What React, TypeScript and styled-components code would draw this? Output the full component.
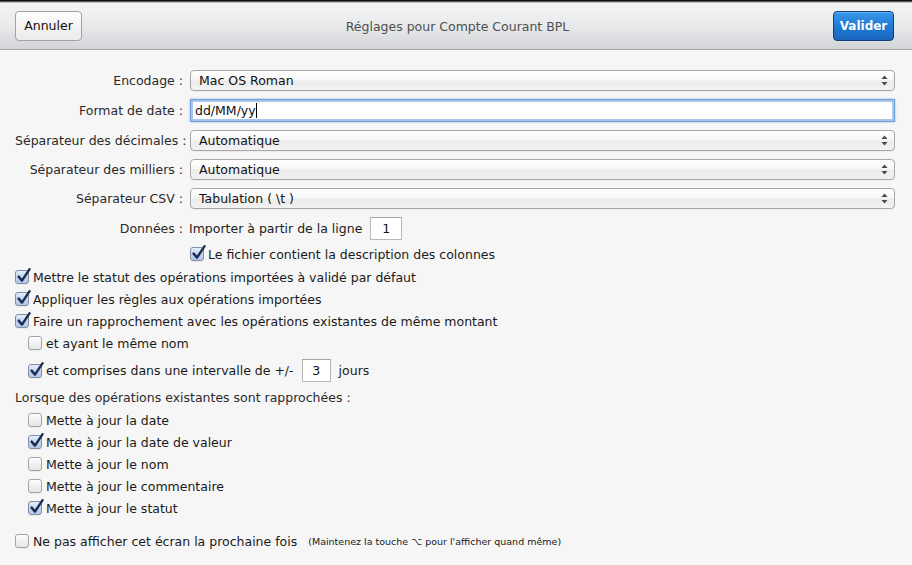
import React from "react";
import styled, { createGlobalStyle } from "styled-components";

const GlobalStyle = createGlobalStyle`
  html, body { margin: 0; padding: 0; }
  body {
    background: #f6f6f6;
    font-family: "DejaVu Sans", "Liberation Sans", sans-serif;
    font-size: 12.5px;
    color: #1c1c1c;
  }
  * { box-sizing: border-box; }
`;

const Window = styled.div`
  width: 912px;
  height: 565px;
  background: #f6f6f6;
  display: flex;
  flex-direction: column;
  overflow: hidden;
`;

const Header = styled.div`
  height: 50px;
  flex: none;
  display: flex;
  align-items: center;
  justify-content: space-between;
  padding: 0 18px 0 15px;
  background: linear-gradient(#0a0a0a 0, #1c1c1c 1px, #8a8a8a 2px, #f4f4f5 3px, #e9eaec 25px, #d3d4d7 49px);
  border-bottom: 1px solid #a9a9ab;
`;

const Title = styled.div`
  color: #4f4f4f;
  font-size: 12.5px;
  margin-top: 3px;
`;

const Button = styled.button<{ $primary?: boolean }>`
  height: 30px;
  margin-top: 2px;
  padding: 0;
  width: ${(p) => (p.$primary ? "61px" : "67px")};
  border-radius: 4px;
  font-family: inherit;
  font-size: ${(p) => (p.$primary ? "12px" : "12.5px")};
  ${(p) =>
    p.$primary
      ? `
    color: #fff;
    font-weight: bold;
    background: linear-gradient(#3a98ea, #1f7bd5 50%, #1a66bd);
    border: 1px solid #0f3f78;
    box-shadow: inset 0 1px 0 rgba(255,255,255,0.25);
  `
      : `
    color: #111;
    background: linear-gradient(#fefefe, #f3f3f3 50%, #ececec);
    border: 1px solid #a2a2a4;
  `}
`;

const Content = styled.div`
  padding: 20px 17px 0 15px;
  display: flex;
  flex-direction: column;
`;

const FormGrid = styled.div`
  display: grid;
  grid-template-columns: 168px 1fr;
  column-gap: 7px;
  row-gap: 8px;
  align-items: center;
`;

const Label = styled.div`
  text-align: right;
  color: #2a2a2a;
  white-space: nowrap;
`;

const Popup = styled.div`
  height: 21px;
  border: 1px solid #a7a7a7;
  border-radius: 4px;
  background: linear-gradient(#ffffff, #f7f7f7 45%, #ececec 55%, #f2f2f2);
  display: flex;
  align-items: center;
  justify-content: space-between;
  padding: 0 6px 0 8px;
  color: #111;
  box-shadow: 0 1px 0 rgba(0,0,0,0.04);
`;

const TextField = styled.div`
  height: 23px;
  border: 1px solid #6f9fd6;
  box-shadow: 0 0 0 2px #a9c7ea inset, 0 0 2px #8cb6e8;
  background: #fff;
  display: flex;
  align-items: center;
  padding: 0 4px;
  color: #111;
`;

const Caret = styled.span`
  display: inline-block;
  width: 1px;
  height: 15px;
  background: #000;
`;

const Inline = styled.div`
  display: flex;
  align-items: center;
  gap: 8px;
  margin-left: -1px;
`;

const SmallField = styled.div<{ $w?: number; $ml?: number }>`
  width: ${(p) => p.$w ?? 32}px;
  height: 23px;
  margin-left: ${(p) => p.$ml ?? 0}px;
  background: #fff;
  border: 1px solid #b8b8b8;
  border-top-color: #a5a5a5;
  display: flex;
  align-items: center;
  justify-content: center;
  color: #111;
`;

const CheckRow = styled.div<{ $indent?: number; $top?: number; $h?: number }>`
  display: flex;
  align-items: center;
  gap: 4px;
  height: ${(p) => p.$h ?? 22}px;
  padding-left: ${(p) => p.$indent ?? 0}px;
  margin-top: ${(p) => p.$top ?? 0}px;
  color: #1a1a1a;
  white-space: nowrap;
`;

const SectionTitle = styled.div<{ $top?: number }>`
  height: 22px;
  display: flex;
  align-items: center;
  margin-top: ${(p) => p.$top ?? 0}px;
  color: #2a2a2a;
`;

const Note = styled.span`
  font-size: 9.5px;
  margin-left: 7px;
  color: #1a1a1a;
`;

const Suffix = styled.span`
  margin-left: 4px;
`;

const Box = styled.span<{ $checked?: boolean }>`
  position: relative;
  flex: none;
  width: 14px;
  height: 14px;
  border-radius: 3px;
  border: 1px solid ${(p) => (p.$checked ? "#7f8ea6" : "#a3a3a3")};
  background: ${(p) =>
    p.$checked
      ? "linear-gradient(#e6eefa, #c4d5ee 50%, #b3c8e8)"
      : "linear-gradient(#ffffff, #f1f1f1 50%, #e6e6e6)"};
  box-shadow: 0 1px 0 rgba(0,0,0,0.05);
`;

const CheckMark = styled.svg`
  position: absolute;
  left: 1px;
  top: -3px;
  width: 14px;
  height: 15px;
  overflow: visible;
`;

const Check: React.FC<{ checked?: boolean }> = ({ checked }) => (
  <Box $checked={checked}>
    {checked && (
      <CheckMark viewBox="0 0 14 15">
        <path
          d="M1.6 8.6 L5 12.6 L12.6 1.2"
          fill="none"
          stroke="#1d2c52"
          strokeWidth="2.4"
          strokeLinecap="round"
          strokeLinejoin="round"
        />
      </CheckMark>
    )}
  </Box>
);

const Arrows = () => (
  <svg width="7" height="11" viewBox="0 0 7 11">
    <path d="M3.5 0.5 L6.5 4 L0.5 4 Z" fill="#4a4a4a" />
    <path d="M3.5 10.5 L6.5 7 L0.5 7 Z" fill="#4a4a4a" />
  </svg>
);

const PopupField: React.FC<{ value: string }> = ({ value }) => (
  <Popup>
    <span>{value}</span>
    <Arrows />
  </Popup>
);

export default function App() {
  return (
    <>
      <GlobalStyle />
      <Window>
        <Header>
          <Button>Annuler</Button>
          <Title>Réglages pour Compte Courant BPL</Title>
          <Button $primary>Valider</Button>
        </Header>
        <Content>
          <FormGrid>
            <Label>Encodage :</Label>
            <PopupField value="Mac OS Roman" />
            <Label>Format de date :</Label>
            <TextField>
              dd/MM/yy
              <Caret />
            </TextField>
            <Label>Séparateur des décimales :</Label>
            <PopupField value="Automatique" />
            <Label>Séparateur des milliers :</Label>
            <PopupField value="Automatique" />
            <Label>Séparateur CSV :</Label>
            <PopupField value="Tabulation ( \t )" />
            <Label>Données :</Label>
            <Inline>
              <span>Importer à partir de la ligne</span>
              <SmallField>1</SmallField>
            </Inline>
            <span />
            <CheckRow $h={14} $top={-1}>
              <Check checked />
              <span>Le fichier contient la description des colonnes</span>
            </CheckRow>
          </FormGrid>

          <CheckRow $top={5}>
            <Check checked />
            <span>Mettre le statut des opérations importées à validé par défaut</span>
          </CheckRow>
          <CheckRow>
            <Check checked />
            <span>Appliquer les règles aux opérations importées</span>
          </CheckRow>
          <CheckRow>
            <Check checked />
            <span>Faire un rapprochement avec les opérations existantes de même montant</span>
          </CheckRow>
          <CheckRow $indent={13}>
            <Check />
            <span>et ayant le même nom</span>
          </CheckRow>
          <CheckRow $indent={13} $top={5} $h={23}>
            <Check checked />
            <span>et comprises dans une intervalle de +/-</span>
            <SmallField $w={29} $ml={4}>3</SmallField>
            <Suffix>jours</Suffix>
          </CheckRow>

          <SectionTitle $top={4}>Lorsque des opérations existantes sont rapprochées :</SectionTitle>
          <CheckRow $indent={13} $top={1}>
            <Check />
            <span>Mette à jour la date</span>
          </CheckRow>
          <CheckRow $indent={13}>
            <Check checked />
            <span>Mette à jour la date de valeur</span>
          </CheckRow>
          <CheckRow $indent={13}>
            <Check />
            <span>Mette à jour le nom</span>
          </CheckRow>
          <CheckRow $indent={13}>
            <Check />
            <span>Mette à jour le commentaire</span>
          </CheckRow>
          <CheckRow $indent={13}>
            <Check checked />
            <span>Mette à jour le statut</span>
          </CheckRow>

          <CheckRow $top={11}>
            <Check />
            <span>Ne pas afficher cet écran la prochaine fois</span>
            <Note>(Maintenez la touche ⌥ pour l'afficher quand même)</Note>
          </CheckRow>
        </Content>
      </Window>
    </>
  );
}
